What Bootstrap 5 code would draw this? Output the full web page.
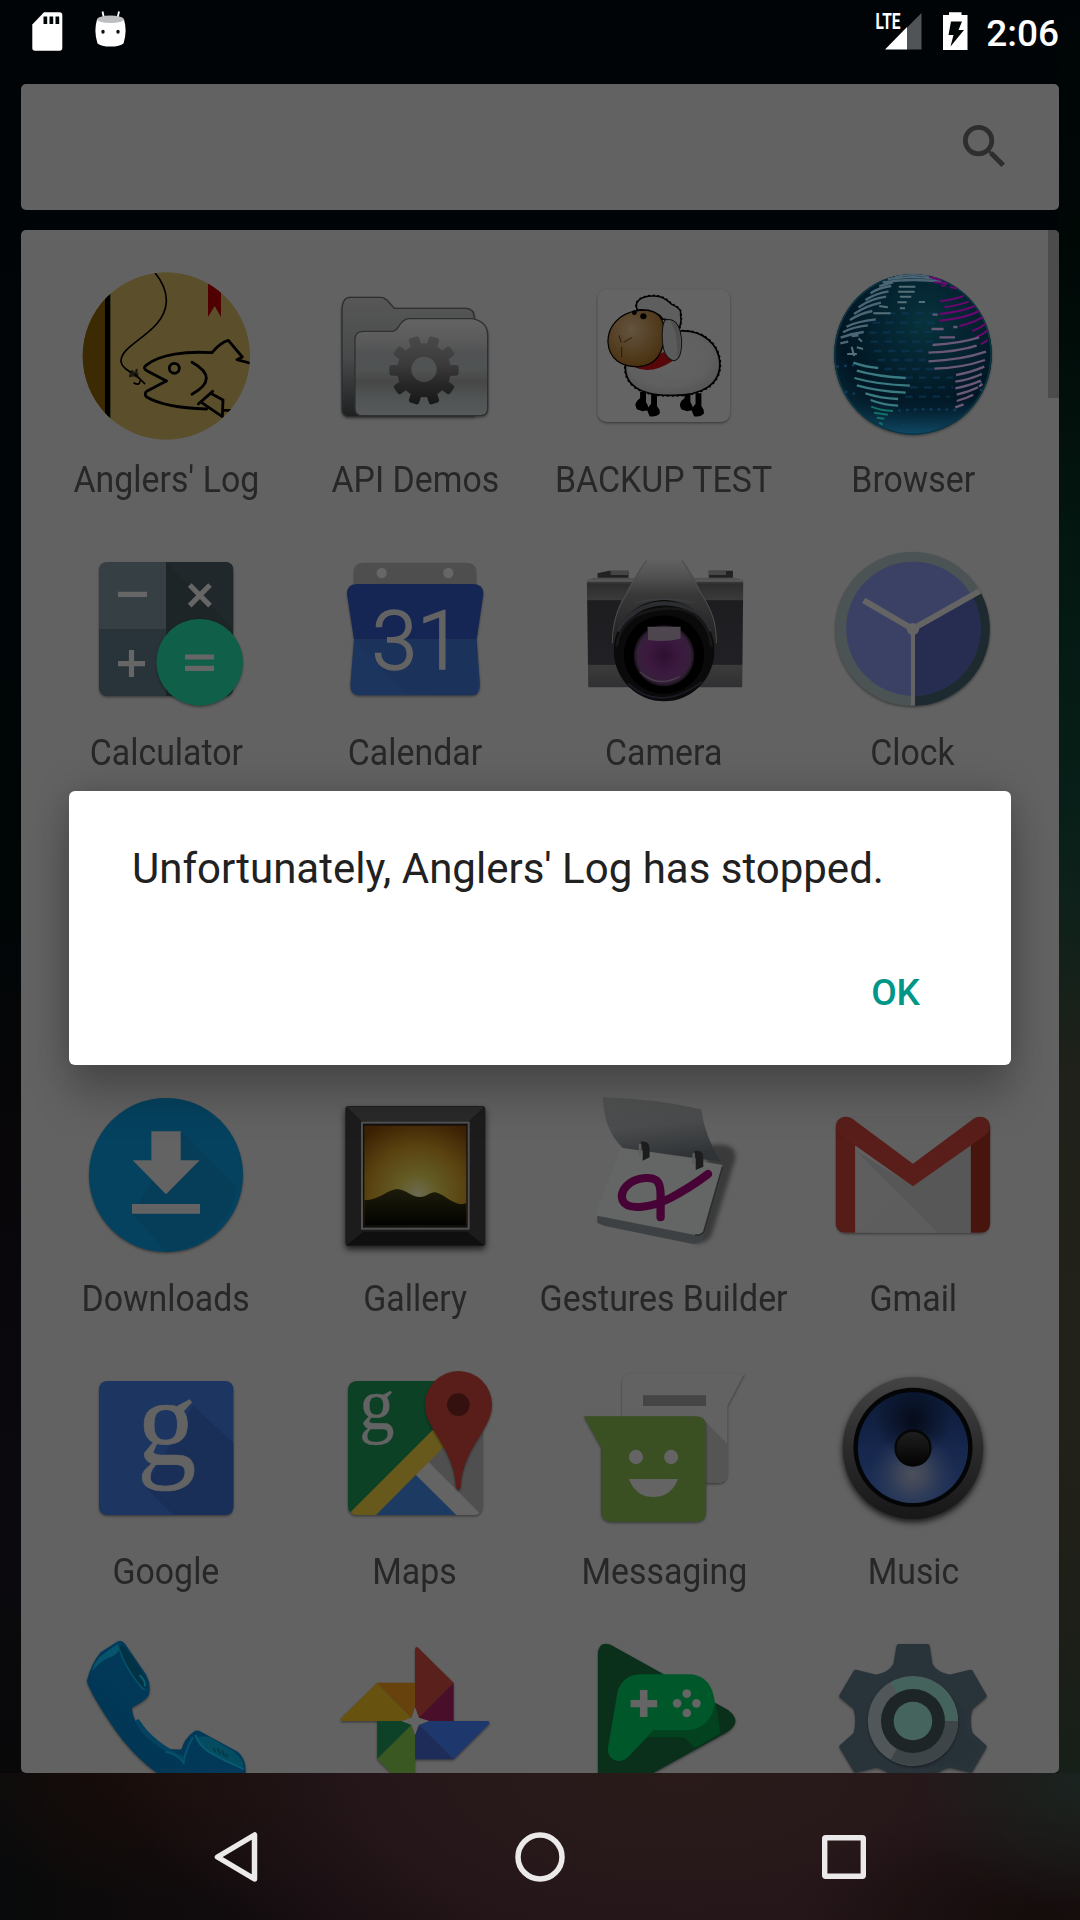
<!DOCTYPE html>
<html lang="en">
<head>
<meta charset="utf-8">
<meta name="viewport" content="width=device-width, initial-scale=1">
<title>Launcher</title>
<link rel="stylesheet" href="https://cdn.jsdelivr.net/npm/bootstrap@5.3.0/dist/css/bootstrap.min.css">
<style>
body{width:1080px;height:1920px;overflow:hidden;font-family:Roboto,"Liberation Sans",sans-serif;
 background:
 linear-gradient(#000406 0,#000806 250px,#041711 550px,#071f18 800px,#10211a 930px,#20211a 1080px,#22211a 1400px,#1e1f18 1600px,#171f19 1773px) 1058px 0/22px 1773px no-repeat,
 linear-gradient(#000406 0,#000506 900px,#080609 1150px,#0b090e 1500px,#080809 1773px)}
.status{height:63px}
.search{height:126px;margin:21px 21px 20px;padding:0 53px 2px 0;background:#626262;border-radius:5px}
.apps{height:1543px;margin:0 21px;padding:42px 22px 0 20px;background:#626262;border-radius:5px;overflow:hidden}
.app{width:249px;height:273px;flex:none}
.app svg{width:168px;height:168px;flex:none;overflow:visible}
.app span{display:block;margin:18.500px 0 0 1px;font-size:37.300px;line-height:40px;color:#272727;white-space:nowrap;transform:scaleX(.908)}
.thumb{right:0;top:0;width:11px;height:168px;background:#4c4c4c}
.soft{filter:drop-shadow(0 4px 3px rgba(0,0,0,.4))}
.alertbox{left:69px;top:791px;width:942px;height:274px;background:#fff;border-radius:6px;padding:53px 63px 0;
 box-shadow:0 34px 42px rgba(0,0,0,.2),0 0 34px rgba(0,0,0,.2)}
.msg{font-size:42px;line-height:49px;color:#212121;white-space:nowrap}
.ok{font-size:37px;line-height:44px;color:#009688;font-weight:500;padding:0 28px 0 0;margin-top:78px}
.clk{font-size:37px;line-height:40px;font-weight:500;color:#fff;margin:14px 21px 0 0}
.sysnav{height:147px;padding-top:21px;background:
 radial-gradient(ellipse 170px 130px at 1080px 10px,#1a231f 0,transparent 100%),
 radial-gradient(ellipse 260px 110px at 1040px 140px,#150c0c 0,transparent 100%),
 radial-gradient(ellipse 560px 260px at 680px 0,#2a1b1a 0,#26171a 50%,transparent 100%),
 radial-gradient(ellipse 260px 130px at 180px 0,#1a0e0b 0,transparent 100%),
 linear-gradient(90deg,#080a0b 0,#0c0a0a 70px,#120b0e 300px,#1d0f12 560px,#231416 820px,#170f0f 1080px)}
.sysnav a{width:304px}
</style>
</head>
<body>
<svg width="0" height="0" class="position-absolute">
<defs>
<linearGradient id="fback" x2="0" y2="1"><stop stop-color="#575757"/><stop offset=".5" stop-color="#484a4b"/><stop offset="1" stop-color="#1d1f20"/></linearGradient>
<linearGradient id="ffront" x2="0" y2="1"><stop stop-color="#646464"/><stop offset=".25" stop-color="#595959"/><stop offset=".35" stop-color="#505253"/><stop offset=".52" stop-color="#505353"/><stop offset=".65" stop-color="#474747"/><stop offset=".8" stop-color="#505353"/><stop offset="1" stop-color="#575a5a"/></linearGradient>
<linearGradient id="gearf" x2="0" y2="1"><stop stop-color="#4a4a4a"/><stop offset=".4" stop-color="#3c3c3c"/><stop offset=".7" stop-color="#262626"/><stop offset="1" stop-color="#151515"/></linearGradient>
<radialGradient id="face" cx=".42" cy=".35" r=".65"><stop stop-color="#63533f"/><stop offset="1" stop-color="#4a3210"/></radialGradient>
<radialGradient id="fleece" cx=".45" cy=".4" r=".65"><stop stop-color="#646464"/><stop offset=".7" stop-color="#5f5f5f"/><stop offset="1" stop-color="#545454"/></radialGradient>
<radialGradient id="globe" cx=".58" cy=".3" r=".72"><stop stop-color="#0c4a52"/><stop offset=".4" stop-color="#06303d"/><stop offset=".75" stop-color="#021a28"/><stop offset="1" stop-color="#0a3444"/></radialGradient>
<linearGradient id="sea" x2="0" y2="1"><stop offset=".76" stop-color="#000f1c" stop-opacity=".4"/><stop offset="1" stop-color="#0f4a66"/></linearGradient>
<linearGradient id="cbody" x2="0" y2="1"><stop stop-color="#555"/><stop offset=".06" stop-color="#2d2d2d"/><stop offset=".2" stop-color="#3a3a3a"/><stop offset=".21" stop-color="#1d1d20"/><stop offset=".79" stop-color="#212125"/><stop offset=".8" stop-color="#3b3b3b"/><stop offset="1" stop-color="#303033"/></linearGradient>
<linearGradient id="chump" x2="0" y2="1"><stop stop-color="#626262"/><stop offset=".2" stop-color="#525252"/><stop offset=".42" stop-color="#383838"/><stop offset="1" stop-color="#1f1f1f"/></linearGradient>
<radialGradient id="lens"><stop stop-color="#2d0f30"/><stop offset=".6" stop-color="#3c1a40"/><stop offset=".88" stop-color="#35203a"/><stop offset="1" stop-color="#151015"/></radialGradient>
<radialGradient id="sky" cx=".52" cy=".68" r=".78"><stop stop-color="#6c6a50"/><stop offset=".25" stop-color="#635b24"/><stop offset=".6" stop-color="#5a4310"/><stop offset="1" stop-color="#3d2104"/></radialGradient>
<linearGradient id="hill" x2="0" y2="1"><stop stop-color="#1d1c0a"/><stop offset="1" stop-color="#020201"/></linearGradient>
<linearGradient id="flap" x2=".2" y2="1"><stop stop-color="#535454"/><stop offset=".5" stop-color="#4a4c4d"/><stop offset="1" stop-color="#303336"/></linearGradient>
<linearGradient id="ring" x2="0" y2="1"><stop stop-color="#444"/><stop offset=".5" stop-color="#2b2b2b"/><stop offset="1" stop-color="#171717"/></linearGradient>
<linearGradient id="cone" x2="0" y2="1"><stop stop-color="#0c1b38"/><stop offset=".5" stop-color="#16264c"/><stop offset="1" stop-color="#1f3358"/></linearGradient>
<radialGradient id="coneg" cx=".5" cy=".74" r=".4"><stop stop-color="#4c505b"/><stop offset=".3" stop-color="#424859" stop-opacity=".9"/><stop offset="1" stop-color="#2a3a5c" stop-opacity="0"/></radialGradient>
<radialGradient id="coned" cx=".5" cy=".25" r=".35"><stop stop-color="#060b18"/><stop offset="1" stop-color="#060b18" stop-opacity="0"/></radialGradient>
<linearGradient id="tube" x1="0" y1="1" x2="1" y2="0"><stop stop-color="#013450"/><stop offset=".55" stop-color="#02395a"/><stop offset="1" stop-color="#05506c"/></linearGradient>
<linearGradient id="knob" x2="0" y2="1"><stop stop-color="#1e1e1e"/><stop offset="1" stop-color="#030303"/></linearGradient>
</defs>
</svg>

<header class="status d-flex align-items-start">
 <svg width="1080" height="63" viewBox="0 0 1080 63" class="position-absolute">
  <path d="M44 12.300H59.500Q62.300 12.300 62.300 15V48Q62.300 50.700 59.500 50.700H35Q32.300 50.700 32.300 48V24.500Z" fill="#fff"/>
  <path d="M43.500 16.500h3.700v7.500h-3.700zM49.500 16.500h3.700v7.500h-3.700zM55.500 16.500h3.700v7.500h-3.700z" fill="#000506"/>
  <path d="M102.500 11.500l2 9M119 11.500l-2 9" stroke="#fff" stroke-width="1.800"/>
  <path d="M97 19.500Q93.500 31 97.500 43.500Q101 46.600 110.500 46.600T123.500 43.500Q127.500 31 124 19.500Z" fill="#fff"/>
  <ellipse cx="110.500" cy="19.300" rx="13.500" ry="3.700" fill="#bcbec0"/>
  <ellipse cx="103" cy="31.700" rx="1.700" ry="2" fill="#111"/><ellipse cx="118" cy="31.700" rx="1.700" ry="2" fill="#111"/>
  <text x="875.500" y="29" font-size="22.500" font-weight="700" fill="#fff" textLength="25" lengthAdjust="spacingAndGlyphs">LTE</text>
  <path d="M907 27.500L921.500 13V49.500H907Z" fill="#515456"/><path d="M907 27V49.500H885Z" fill="#fff"/>
  <path d="M949 12.300H961.500V15H967.500V50H943V15H949Z" fill="#fff"/>
  <path d="M951 21.500H962L958.500 30H964L950.500 46.500L953.500 35H948.500Z" fill="#000506"/>
 </svg>
 <div class="clk ms-auto">2:06</div>
</header>

<div class="search d-flex align-items-center justify-content-end">
 <svg width="44" height="44" viewBox="2.600 2.600 18.300 18.300"><path fill="#2e2e2e" d="M15.500 14h-.79l-.28-.27A6.471 6.471 0 0 0 16 9.500 6.500 6.500 0 1 0 9.500 16c1.610 0 3.090-.59 4.230-1.570l.27.28v.79l5 4.990L20.490 19l-4.990-5zm-6 0C7.010 14 5 11.990 5 9.500S7.010 5 9.500 5 14 7.010 14 9.500 11.990 14 9.500 14z"/></svg>
</div>

<main class="apps position-relative">
<div class="thumb position-absolute"></div>
<div class="d-flex flex-wrap text-center">

<div class="app d-flex flex-column align-items-center">
<svg viewBox="66 66 504 504"><clipPath id="ca"><circle cx="319" cy="318" r="251"/></clipPath>
<g clip-path="url(#ca)"><path fill="#5b4e2a" d="M60 60H580V580H60z"/><path fill="#3c2a02" d="M60 60H136V580H60z"/><path d="M135 60H151V580H135z"/>
<path fill="#500000" d="M444 90H483V201L464 168L444 201z"/>
<g fill="none" stroke="#000" stroke-width="8.500" stroke-linecap="round" stroke-linejoin="round">
<path stroke-width="5" d="M283 66C310 98 320 125 319 155C314 250 180 280 183 335C184 350 200 362 230 377"/>
<path stroke="#1b1a12" stroke-width="7" d="M210 378L232 372M216 363L232 380M230 360L226 378M212 371L230 376"/><path stroke-width="5" d="M226 374L254 401M222 399Q238 408 240 394"/>
<path d="M319 393L262 363Q247 355 258 346C300 312 380 303 456 308Q480 278 505 271L547 321L531 329L580 342"/>
<path d="M319 393L263 422Q250 430 260 441C300 465 370 475 440 477M490 481H520"/>
<path d="M415 462L458 424M452 430L489 450L487 500L425 458M396 337Q482 385 396 433"/><circle cx="343" cy="355" r="15"/></g></g></svg>
<span>Anglers' Log</span></div>

<div class="app d-flex flex-column align-items-center">
<svg viewBox="813 66 504 504"><g class="soft"><path fill="url(#fback)" stroke="#2e2e2e" stroke-width="4" d="M846 185Q846 142 870 142H962Q972 142 981 151L1003 175H1218Q1243 176 1243 205V500H868Q846 500 846 478z"/>
<path fill="url(#ffront)" stroke="#303030" stroke-width="4" d="M885 268Q885 244 910 244H998Q1008 243 1016 230Q1030 206 1048 206H1238Q1283 216 1283 256V475Q1283 497 1262 497H905Q885 497 885 475z"/></g>
<mask id="mg"><g fill="#fff"><circle cx="1092" cy="361" r="81"/><rect x="988" y="345" width="208" height="32" rx="7"/><rect x="988" y="345" width="208" height="32" rx="7" transform="rotate(36 1092 361)"/><rect x="988" y="345" width="208" height="32" rx="7" transform="rotate(72 1092 361)"/><rect x="988" y="345" width="208" height="32" rx="7" transform="rotate(108 1092 361)"/><rect x="988" y="345" width="208" height="32" rx="7" transform="rotate(144 1092 361)"/></g><circle cx="1092" cy="358" r="38"/></mask>
<rect x="980" y="250" width="224" height="222" fill="url(#gearf)" mask="url(#mg)"/></svg>
<span>API Demos</span></div>

<div class="app d-flex flex-column align-items-center">
<svg viewBox="116 66 487.800 504" preserveAspectRatio="none"><rect class="soft" x="167" y="118" width="385" height="398" rx="27" fill="#646464"/>
<path d="M299 425V462M331 430V480M428 425V462M460 430V480" stroke="#000" stroke-width="17"/>
<path d="M290 445Q315 455 315 480L298 484L281 478Q270 460 290 445zM322 462Q348 466 348 490Q338 502 318 499L310 478zM419 445Q444 455 444 480L427 484L410 478Q399 460 419 445zM451 462Q477 466 476 490Q467 502 447 499L439 478z"/>
<path d="M249 338C240 400 285 437 380 436C475 438 524 400 522 340C520 280 470 240 408 243" fill="none" stroke="#000" stroke-width="9" stroke-dasharray="0 14" stroke-linecap="round"/>
<path d="M249 338C240 400 285 437 380 436C475 438 524 400 522 340C520 280 470 240 408 243L380 330Z" fill="url(#fleece)" stroke="#000" stroke-width="5"/>
<path d="M275 352Q322 375 384 334L358 306z" fill="#570709"/>
<path d="M281 182C225 192 197 232 197 275C200 330 240 351 285 350C335 347 362 310 361 240Q355 190 320 179z" fill="url(#face)" stroke="#000" stroke-width="3.500"/>
<path d="M283 180C270 155 295 137 328 138C355 136 372 152 382 163C400 170 412 182 408 197Q412 215 403 238" fill="none" stroke="#000" stroke-width="8" stroke-dasharray="0 13" stroke-linecap="round"/>
<path d="M283 180C270 155 295 137 328 138C355 136 372 152 382 163C400 170 412 182 408 197Q412 215 403 238Q385 205 357 208Q335 176 283 180z" fill="#5e5e5e" stroke="#000" stroke-width="4.500"/>
<path d="M362 210Q405 200 411 270Q412 330 388 332Q358 325 355 270Q353 230 362 210z" fill="#5b5b5b" stroke="#111" stroke-width="3"/>
<path d="M378 215Q400 240 398 320Q412 300 406 250Q400 215 378 215z" fill="#4f4f4f"/>
<circle cx="300" cy="199" r="9"/><circle cx="274" cy="188" r="7"/><path d="M229 256L236 278M243 277L266 263M237 290V322" stroke="#2c1d08" stroke-width="3"/></svg>
<span>BACKUP TEST</span></div>

<div class="app d-flex flex-column align-items-center">
<svg viewBox="839.200 66 487.800 504" preserveAspectRatio="none"><clipPath id="cg"><ellipse cx="1083" cy="313" rx="229" ry="241"/></clipPath>
<ellipse class="soft" cx="1083" cy="313" rx="229" ry="241" fill="url(#globe)"/><ellipse cx="1083" cy="313" rx="229" ry="241" fill="url(#sea)"/>
<g clip-path="url(#cg)" fill="none" stroke-width="6">
<ellipse cx="1083" cy="313" rx="227" ry="239" stroke="#0a3644" stroke-width="5"/>
<path stroke="#0e3a5c" stroke-width="7" stroke-dasharray="22 18" d="M970 190H1180M965 218H1150M955 248L1160 245M960 275H1140M970 303H1130M980 330H1120M1000 357H1150M1060 383H1200M1075 412H1200M1060 440H1190" opacity=".6"/>
<path stroke="#0e3a5c" stroke-width="7" stroke-dasharray="8 15" d="M1040 482Q1110 475 1210 480M1050 525H1100M860 350L915 345M885 425L930 435M1280 370V430"/>
<path stroke="#4c6676" stroke-width="7" d="M1030 78Q1080 70 1130 77M1010 87Q1080 76 1150 86M995 97Q1080 84 1165 95M985 108L1025 97M960 130Q985 112 1020 108M945 150Q975 130 1012 124M925 172Q960 146 1005 140M912 192Q945 168 990 158M900 210Q930 190 965 183M890 230Q920 214 975 208M880 247Q910 230 952 226M873 263Q905 250 940 246M872 280L895 275M905 258L925 256"/>
<path stroke="#567078" d="M1042 110H1090M1040 125H1088M1045 140H1078M1038 157H1065M1045 175H1060M985 168L1010 172M968 190H1018M1100 156H1118M925 265L935 275M920 292L938 297M892 312H920M905 290L912 318"/>
<path stroke="#3a7a80" stroke-width="7" d="M910 338Q940 350 982 354M920 362Q980 380 1062 384M913 384Q980 404 1074 407M920 406Q980 424 1062 428M945 430Q990 445 1040 447M960 450Q1000 466 1040 467"/>
<path stroke="#147068" d="M962 470Q990 482 1025 483M970 488L1010 494M978 503L1000 506M985 518L995 524"/>
<path stroke="#6a0870" d="M1130 80L1165 90M1145 97L1185 100M1165 108L1180 104M1190 112L1210 115M1162 153Q1200 150 1230 138M1175 172Q1220 165 1245 155M1160 192Q1225 185 1262 168M1160 212Q1235 205 1275 183M1218 228Q1260 218 1288 200M1255 243Q1280 234 1298 218M1265 262Q1288 252 1302 240M1280 283L1300 270"/>
<path stroke="#6a5878" stroke-width="7" d="M1140 194H1155M1137 237H1172M1200 231H1212M1140 285Q1220 280 1275 262M1128 308Q1215 305 1268 287M1128 334Q1225 330 1295 305M1145 356Q1225 354 1292 330M1208 375Q1250 368 1290 350M1206 395Q1250 388 1283 372M1206 415Q1250 406 1280 392M1210 434Q1245 426 1272 412M1210 453Q1235 446 1258 434M1206 472L1230 463M1275 410L1285 402M1160 262H1205"/></g></svg>
<span>Browser</span></div>

<div class="app d-flex flex-column align-items-center">
<svg viewBox="66 45 504 504"><clipPath id="cc"><rect x="117" y="96" width="403" height="402" rx="24"/></clipPath><g class="soft"><g clip-path="url(#cc)"><path fill="#363f44" d="M117 96H318V297H117z"/><path fill="#1e2527" d="M318 96H520V498H318z"/><path fill="#20282b" d="M318 96L520 297V96z"/><path fill="#29343a" d="M117 297H318V498H117z"/></g></g>
<circle class="soft" cx="419" cy="397" r="130" fill="#0f5f49"/>
<path d="M174 193H261M174 401H255M214.500 360V441M375 381H462M375 415H462M389 165L450 227M450 165L389 227" stroke="#666" stroke-width="15.500"/></svg>
<span>Calculator</span></div>

<div class="app d-flex flex-column align-items-center">
<svg viewBox="813 45 504 504"><path fill="#4e4e4e" d="M880 175V130Q880 98 912 98H1218Q1250 98 1250 130V175z"/><circle cx="965" cy="129" r="15.500" fill="#666"/><circle cx="1165" cy="129" r="15.500" fill="#666"/>
<g class="soft"><path fill="#162654" d="M861 192Q861 162 890 162H1240Q1270 162 1270 192L1250 328H882z"/><path fill="#1c355f" d="M882 328H1250L1260 465Q1260 496 1230 496H900Q871 496 871 465z"/></g><path fill="#1a3058" d="M882 328L1040 490L1250 496V328z" opacity=".6"/>
<text x="1071" y="416" font-size="243" font-weight="300" text-anchor="middle" fill="#636363" stroke="#636363" stroke-width="5" textLength="272" lengthAdjust="spacingAndGlyphs">31</text></svg>
<span>Calendar</span></div>

<div class="app d-flex flex-column align-items-center">
<svg viewBox="116 45 487.800 504" preserveAspectRatio="none"><path d="M167 150V130L200 122H257V150zM490 150V122H560V150z" fill="#222"/><path d="M205 123H257V135H205zM490 122H540V135H490z" fill="#464646"/>
<path d="M136 156Q140 145 160 143H565Q588 145 590 156L587 472H140z" fill="url(#cbody)"/><path d="M138 152H588" stroke="#585858" stroke-width="7"/>
<path d="M318 88Q360 82 404 88C425 95 440 130 470 190C500 240 513 290 513 345H209C212 270 225 220 262 165C285 130 295 98 318 88z" fill="url(#chump)"/><path d="M310 92C285 120 275 150 250 195C220 240 210 290 210 340M412 92C430 115 445 150 470 195C505 250 512 290 512 340" fill="none" stroke="#4c4c4c" stroke-width="3"/>
<ellipse cx="360" cy="362" rx="146" ry="152" fill="#0a0a0a"/><path d="M228 305Q270 222 360 220T492 305" fill="none" stroke="#2b2d31" stroke-width="13"/><path d="M222 350Q235 245 360 236T498 350" fill="none" stroke="#171717" stroke-width="8"/><path d="M255 460Q350 550 470 455" fill="none" stroke="#1b1a26" stroke-width="5"/><path d="M275 218Q360 196 445 218" stroke="#3a3c40" stroke-width="5" fill="none"/>
<ellipse cx="360" cy="374" rx="117" ry="118" fill="#000"/><ellipse cx="360" cy="377" rx="88" ry="92" fill="url(#lens)"/><path d="M312 290H408V326Q360 338 314 330z" fill="#4e464e"/><path d="M290 425Q340 475 405 440" fill="none" stroke="#4c3d4e" stroke-width="4"/></svg>
<span>Camera</span></div>

<div class="app d-flex flex-column align-items-center">
<svg viewBox="839.200 45 487.800 504" preserveAspectRatio="none"><ellipse class="soft" cx="1082" cy="297" rx="225" ry="231" fill="#4b5355"/><path fill="#1d2a2f" d="M1082 297L1279 187A225 231 0 0 1 1082 528z"/><ellipse cx="1084" cy="296" rx="195" ry="201" fill="#3b4165"/><path fill="#272d50" d="M1082 297L1256 199A195 201 0 0 1 1084 497z"/>
<path d="M1082 297L940 211M1082 297L1277 183" stroke="#646464" stroke-width="18"/><path d="M1083 297V527" stroke="#646464" stroke-width="12"/><circle cx="1083" cy="297" r="18" fill="#646464"/></svg>
<span>Clock</span></div>

<div class="w-100" style="height:273px"></div>

<div class="app d-flex flex-column align-items-center">
<svg viewBox="66 63 504 504"><circle class="soft" cx="318" cy="315" r="231" fill="#05425f"/><path d="M362 184L530 350A231 231 0 0 1 320 546L216 431z" fill="#063e5a"/><path fill="#636363" d="M274 184H362V271H419L318 373L218 271H274zM216 402H420V431H216z"/></svg>
<span>Downloads</span></div>

<div class="app d-flex flex-column align-items-center">
<svg viewBox="813 63 504 504"><g style="filter:drop-shadow(0 10px 9px rgba(0,0,0,.7))"><rect x="856" y="108" width="420" height="420" rx="10" fill="#1c1c1c"/></g><path d="M860 110H1272L1222 158H910z" fill="#2a2a2a"/><path d="M860 526H1272L1222 485H910z" fill="#0f0f0f"/><rect x="906" y="158" width="320" height="318" fill="#101010" stroke="#505050" stroke-width="6"/><rect x="913" y="167" width="306" height="300" fill="url(#sky)"/><path d="M913 391C955 392 985 357 1013 357C1040 360 1055 381 1080 381C1100 381 1110 366 1126 367C1150 372 1180 403 1204 403L1219 400V467H913z" fill="url(#hill)"/></svg>
<span>Gallery</span></div>

<div class="app d-flex flex-column align-items-center">
<svg viewBox="116 63 487.800 504" preserveAspectRatio="none"><path d="M495 225Q570 215 568 265L500 490Q490 520 450 522L430 480z" fill="#2d2d2d" opacity=".75" style="filter:blur(6px)"/>
<path d="M166 435V458L185 467L440 521Q465 524 476 500L530 310V290z" fill="#3d4143"/><path d="M236 232L530 285L475 485Q468 498 450 495L166 437Q162 425 168 410z" fill="#646565"/><path d="M530 290L476 484Q468 498 450 495" fill="none" stroke="#2c2d2e" stroke-width="5"/>
<path d="M182 82Q330 85 468 118Q478 200 525 275L240 234Q185 180 182 82z" fill="url(#flap)"/>
<path d="M292 215Q318 210 318 235V262L298 272V240zM448 243Q474 238 474 262V290L452 300V268z" fill="#1c1c1c"/><path d="M290 222V255M446 250V282" stroke="#5c5c5c" stroke-width="7"/>
<path d="M350 442V375C350 330 335 322 305 324C255 328 230 365 240 392C255 425 330 410 380 383Q440 350 488 312" fill="none" stroke="#470335" stroke-width="24" stroke-linecap="round"/></svg>
<span>Gestures Builder</span></div>

<div class="app d-flex flex-column align-items-center">
<svg viewBox="839.200 63 487.800 504" preserveAspectRatio="none"><g class="soft"><rect x="860" y="141" width="446" height="347" rx="28" fill="#606060"/></g><path d="M915 240L1155 488H1251V226L1083 349z" fill="#575757"/><path d="M915 487L1046 378L1155 488z" fill="#5d5d5d"/><path d="M915 240V487L1046 378z" fill="#5e5e5e"/>
<path d="M859 170V460Q859 488 887 488H915V200z" fill="#561c18"/><path d="M1307 170V460Q1307 488 1279 488H1251V200z" fill="#48140e"/><path d="M859 170C860 140 890 133 908 147L1083 281L1258 147C1276 133 1306 140 1307 170Q1306 185 1295 194L1083 349L871 194Q860 185 859 170z" fill="#591e1a"/></svg>
<span>Gmail</span></div>

<div class="app d-flex flex-column align-items-center">
<svg viewBox="66 42 504 504"><rect class="soft" x="117" y="93" width="403" height="402" rx="24" fill="#1d3561"/><path d="M400 167L520 280V470Q520 495 496 495H340L255 410z" fill="#1a2f57"/>
<text x="320" y="342" font-family="Liberation Serif,serif" font-size="372" text-anchor="middle" fill="#636363" stroke="#636363" stroke-width="2" textLength="178" lengthAdjust="spacingAndGlyphs">g</text></svg>
<span>Google</span></div>

<div class="app d-flex flex-column align-items-center">
<svg viewBox="813 42 504 504"><clipPath id="cm"><rect x="864" y="93" width="404" height="402" rx="26"/></clipPath><g class="soft"><g clip-path="url(#cm)"><path fill="#4f4f4f" d="M864 93H1268V495H864z"/><path fill="#646464" d="M1104 334L1270 500H1190L1066 374z"/><path fill="#1c3a62" d="M1067 374L1190 496H940z"/><path fill="#0c4126" d="M864 93H1240L1160 200L868 495H864z"/><path fill="#67591c" d="M1118 240L868 490V500H943L1170 272z"/></g></g>
<text x="951" y="237" font-family="Liberation Serif,serif" font-size="224" text-anchor="middle" fill="#636363" stroke="#636363" stroke-width="1" textLength="106" lengthAdjust="spacingAndGlyphs">g</text>
<g class="soft"><path d="M1195 63A101 101 0 0 1 1296 164C1296 240 1208 290 1202 412Q1195 428 1188 412C1182 290 1095 240 1095 164A101 101 0 0 1 1195 63z" fill="#5a1e1a"/></g><circle cx="1195" cy="164" r="34" fill="#34110f"/></svg>
<span>Maps</span></div>

<div class="app d-flex flex-column align-items-center">
<svg viewBox="116 42 487.800 504" preserveAspectRatio="none"><g class="soft"><path d="M238 102Q238 70 268 70H594L544 168V368Q544 399 514 399H268Q238 399 238 368z" fill="#626262"/></g><path d="M475 210L544 282V368Q544 399 514 399H475z" fill="#555"/><path d="M299 136H482V168H299z" fill="#454545"/>
<g class="soft"><path d="M127 199H452Q482 199 482 230V484Q482 515 452 515H207Q177 515 177 484V292z" fill="#3a5022"/></g><ellipse cx="278.500" cy="321" rx="20.500" ry="21.500" fill="#646464"/><ellipse cx="380.500" cy="321" rx="20.500" ry="21.500" fill="#646464"/><path d="M258 387H401Q380 441 329 441T258 387z" fill="#646464"/></svg>
<span>Messaging</span></div>

<div class="app d-flex flex-column align-items-center">
<svg viewBox="839.200 42 487.800 504" preserveAspectRatio="none"><g style="filter:drop-shadow(0 10px 9px rgba(0,0,0,.75))"><ellipse cx="1083" cy="294" rx="204" ry="213" fill="url(#ring)"/></g><ellipse cx="1083" cy="292" rx="173" ry="179" fill="#040507"/><ellipse cx="1083" cy="293" rx="160" ry="166" fill="url(#cone)"/><ellipse cx="1083" cy="293" rx="160" ry="166" fill="url(#coneg)"/><ellipse cx="1083" cy="293" rx="160" ry="166" fill="url(#coned)"/><ellipse cx="1083" cy="294" rx="54" ry="56" fill="#060606"/><ellipse cx="1083" cy="296" rx="48" ry="50" fill="url(#knob)"/></svg>
<span>Music</span></div>

<div class="app d-flex flex-column align-items-center">
<svg viewBox="238 51 487.800 504" preserveAspectRatio="none"><g class="soft"><path d="M252 183Q265 130 292 97L340 65Q352 58 362 70L425 165Q440 195 432 225Q425 240 383 263C385 310 430 370 485 385Q505 390 527 388Q535 355 562 335Q572 328 585 336L690 395Q715 415 713 459V480H490C440 455 380 395 345 345C310 295 260 215 252 183z" fill="url(#tube)"/></g>
<path d="M340 72L290 110Q272 130 266 155Q295 118 328 108Q342 100 348 85z" fill="#0a5b70" opacity=".8"/><path d="M352 72Q390 110 420 170Q432 200 422 210Q405 205 380 160Q352 115 346 90z" fill="#023243"/><path d="M346 88Q366 146 400 188Q412 205 422 210" fill="none" stroke="#065066" stroke-width="5"/><path d="M405 165Q425 185 420 200" fill="none" stroke="#0a5c70" stroke-width="6"/>
<path d="M575 352Q590 345 610 352L680 395Q705 415 707 440Q680 435 640 415Q590 390 575 365z" fill="#054c60"/><path d="M568 345Q575 375 610 398Q655 425 708 447" fill="none" stroke="#085a6e" stroke-width="6"/><path d="M620 385l6 12M632 384l8 20M644 390l8 20M655 400l6 12" stroke="#02323f" stroke-width="3"/><path d="M400 305C430 355 480 390 530 415" fill="none" stroke="#034260" stroke-width="14" stroke-linecap="round"/><path d="M480 395Q515 400 533 428Q535 400 560 352" fill="none" stroke="#06526c" stroke-width="6"/></svg>
</div>

<div class="app d-flex flex-column align-items-center">
<svg viewBox="961 51 487.800 504" preserveAspectRatio="none"><g class="soft"><path fill="#675210" d="M1095 188L1195 293L1165 303H992Q987 300 990 295z"/><path fill="#67420c" d="M1095 188H1205V262L1195 293z"/><path fill="#5a211c" d="M1205 88Q1207 77 1214 83L1317 188L1216 293L1205 262z"/><path fill="#490f2a" d="M1317 188V303H1246L1216 293z"/><path fill="#1e376c" d="M1246 303H1417Q1423 306 1420 312L1317 418L1216 314z"/><path fill="#1d2c59" d="M1216 314L1317 418H1205V345z"/><path fill="#0d4128" d="M1095 303H1165L1195 314L1095 417z"/><path fill="#3a5822" d="M1195 314L1205 345V530L1095 417z"/></g><path fill="#646464" d="M1205 262L1216 293L1246 303L1216 314L1205 345L1195 314L1165 303L1195 293z"/></svg>
</div>

<div class="app d-flex flex-column align-items-center">
<svg viewBox="116 51 487.800 504" preserveAspectRatio="none"><path class="soft" d="M168 98Q172 62 205 74L545 269Q590 303 545 335L205 530Q172 540 168 506z" fill="#0a301c"/><path d="M510 250L524 340L450 384L418 352H310L335 325z" fill="#02421f"/><path d="M290 163H440Q500 170 508 250Q495 322 435 330H330L255 412C230 435 195 420 197 385L225 215Q240 165 290 163z" fill="#00582a"/><path d="M290 210H312V240H340V262H312V291H290V262H263V240H290z" fill="#656565"/><g fill="#656565"><ellipse cx="426" cy="221" rx="12.500" ry="13"/><ellipse cx="426" cy="279" rx="12.500" ry="13"/><ellipse cx="398" cy="250" rx="12.500" ry="13"/><ellipse cx="454" cy="250" rx="12.500" ry="13"/></g></svg>
</div>

<div class="app d-flex flex-column align-items-center">
<svg viewBox="839.200 51 487.800 504" preserveAspectRatio="none"><path class="soft" fill="#29343a" stroke="#29343a" stroke-width="14" stroke-linejoin="round" d="M1042 79H1125L1133 135Q1150 165 1190 171L1250 156L1290 228L1250 263Q1238 303 1250 343L1290 380L1250 451L1190 436Q1150 445 1133 475L1125 528H1042L1033 475Q1016 445 976 436L917 451L876 380L917 343Q928 303 917 263L876 228L917 156L976 171Q1016 165 1033 135z"/>
<path d="M1190 220L1236 272Q1228 303 1240 345L1280 382L1248 444L1190 430L1100 450L1000 400z" fill="#263137" opacity=".7"/>
<ellipse class="soft" cx="1083" cy="303" rx="131" ry="135" fill="#515659"/><path d="M1083 303L1018 187A131 135 0 0 1 1214 303z" fill="#45635d"/><path d="M1083 303H1214A131 135 0 0 1 1018 419z" fill="#3d4548"/><ellipse cx="1083" cy="303" rx="93" ry="96" fill="#1e2527"/><ellipse cx="1083" cy="303" rx="56" ry="58" fill="#45645d"/></svg>
</div>
</div>
</main>

<nav class="sysnav d-flex justify-content-center align-items-center">
 <a class="d-flex justify-content-center"><svg width="60" height="60" viewBox="206 1827 60 60"><path d="M217.500 1857L254.500 1835V1879Z" fill="none" stroke="#ebe9e9" stroke-width="5.500" stroke-linejoin="round"/></svg></a>
 <a class="d-flex justify-content-center"><svg width="60" height="60" viewBox="510 1827 60 60"><circle cx="540" cy="1857" r="22" fill="none" stroke="#ebe9e9" stroke-width="5.500"/></svg></a>
 <a class="d-flex justify-content-center"><svg width="60" height="60" viewBox="814 1827 60 60"><rect x="824.700" y="1837.700" width="38.600" height="38.600" rx="1" fill="none" stroke="#ebe9e9" stroke-width="5.400"/></svg></a>
</nav>

<div class="alertbox position-absolute d-flex flex-column" role="alertdialog">
 <div class="msg">Unfortunately, Anglers' Log has stopped.</div>
 <div class="ok align-self-end">OK</div>
</div>
<script src="https://cdn.jsdelivr.net/npm/bootstrap@5.3.0/dist/js/bootstrap.bundle.min.js"></script>
</body>
</html>
